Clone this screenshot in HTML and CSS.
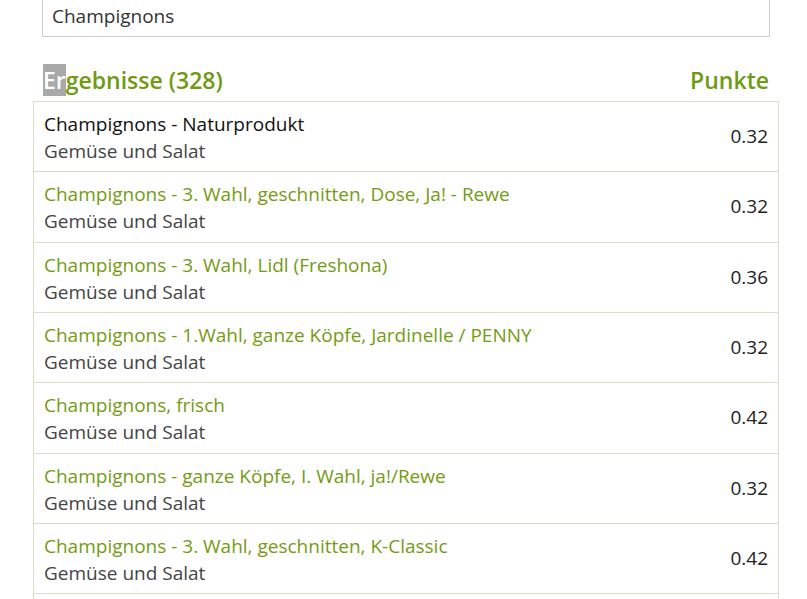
FILE: index.html
```html
<!DOCTYPE html>
<html lang="de">
<head>
  <meta charset="UTF-8" />
  <meta name="viewport" content="width=device-width, initial-scale=1.0"/>
  <title>Suche</title>
  <link rel="stylesheet" href="styles.css">
</head>
<body>

  <div class="page">
    <!-- Suchfeld -->
    <input class="search" type="text" value="Champignons">

    <!-- Kopfzeile der Ergebnisse -->
    <div class="results-head">
      <h2><span class="mark">Er</span>gebnisse (328)</h2>
      <h2>Punkte</h2>
    </div>

    <!-- Ergebnisliste -->
    <ul class="results" id="results"></ul>
  </div>

  <script>
    const items = [
      { name: "Champignons - Naturprodukt", score: "0.32", visited: true },
      { name: "Champignons - 3. Wahl, geschnitten, Dose, Ja! - Rewe", score: "0.32" },
      { name: "Champignons - 3. Wahl, Lidl (Freshona)", score: "0.36" },
      { name: "Champignons - 1.Wahl, ganze Köpfe, Jardinelle / PENNY", score: "0.32" },
      { name: "Champignons, frisch", score: "0.42" },
      { name: "Champignons - ganze Köpfe, I. Wahl, ja!/Rewe", score: "0.32" },
      { name: "Champignons - 3. Wahl, geschnitten, K-Classic", score: "0.42" },
      { name: "Champignons in Scheiben, Dose", score: "0.32" }
    ];

    const list = document.getElementById('results');
    items.forEach(item => {
      const li = document.createElement('li');
      li.className = 'result';
      li.innerHTML = `
        <div class="info">
          <a class="title${item.visited ? ' visited' : ''}">${item.name}</a>
          <div class="category">Gemüse und Salat</div>
        </div>
        <div class="score">${item.score}</div>
      `;
      list.appendChild(li);
    });
  </script>
</body>
</html>
```

FILE: styles.css
```css
/* General */
body {
  margin: 0;
  font-family: "Open Sans", "Liberation Sans", sans-serif;
  color: #333;
  background: #fff;
  overflow: hidden;
}

.page {
  width: 746px;
  margin-left: 33px;
}

/* Search input, scrolled partly out of view */
.search {
  display: block;
  box-sizing: border-box;
  width: 728px;
  height: 49px;
  margin: -12px 9px 0;
  padding: 7px 9px 0;
  border: 1px solid #ccc;
  font-family: inherit;
  font-size: 19px;
  color: #333;
  outline: none;
}

/* Results header */
.results-head {
  display: flex;
  justify-content: space-between;
  align-items: center;
  padding: 0 10px;
  margin-top: 22px;
  height: 42px;
}

.results-head h2 {
  margin: 0;
  font-size: 23px;
  font-weight: 600;
  color: #6f9a12;
  line-height: 32px;
}

.mark {
  background: #a9a9a9;
  color: #fff;
  display: inline-block;
}

/* Result list */
.results {
  list-style: none;
  margin: 0;
  padding: 0;
  border-top: 1px solid #ddddcc;
}

.result {
  display: flex;
  justify-content: space-between;
  align-items: center;
  padding: 9px 10px 6.33px;
  border: 1px solid #ddddcc;
  border-top: none;
  font-size: 19px;
  line-height: 27px;
}

.title {
  display: block;
  color: #749b14;
  text-decoration: none;
}

.title.visited {
  color: #111;
}

.category {
  color: #444;
}

.score {
  color: #222;
  margin-top: -3px;
}
```
